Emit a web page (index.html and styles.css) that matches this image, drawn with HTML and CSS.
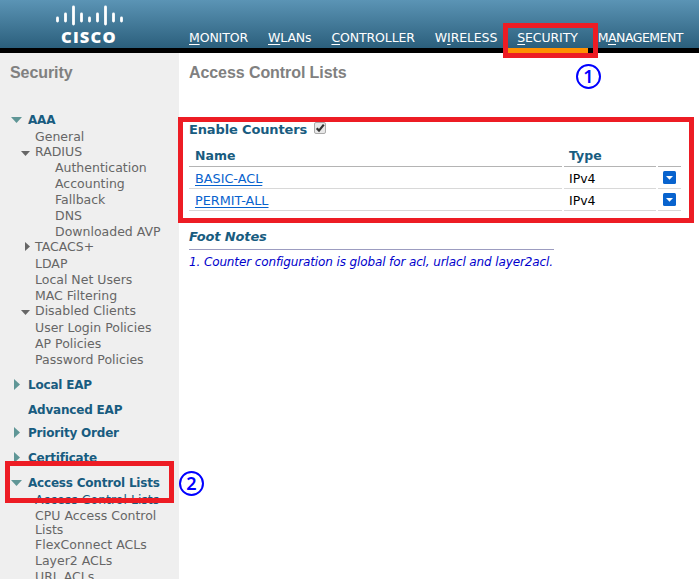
FILE: index.html
```html
<!DOCTYPE html>
<html lang="en">
<head>
<meta charset="utf-8">
<title>Access Control Lists</title>
<link rel="stylesheet" href="styles.css">
</head>
<body>
<header class="topbar">
  <div class="brand">
    <svg class="bars" width="70" height="23" viewBox="0 0 70 23" stroke="#fff" stroke-width="2.8" stroke-linecap="round">
      <path d="M3.5 15V18M11.5 11V18M19.5 4V21M27.5 11V18M35.5 15V18M43.5 11V18M51.5 4V21M59.5 11V18M67.5 15V18"/>
    </svg>
    <span class="wordmark">CISCO</span>
  </div>
  <nav class="menu">
    <a><u>M</u>ONITOR</a>
    <a><u>W</u>LANs</a>
    <a><u>C</u>ONTROLLER</a>
    <a>W<u>I</u>RELESS</a>
    <a class="current"><u>S</u>ECURITY</a>
    <a class="last">M<u>A</u>NAGEMENT</a>
  </nav>
</header>
<div class="body">
  <aside class="sidebar">
    <h2 class="title">Security</h2>
    <ul class="tree">
      <li class="group open">AAA</li>
      <li class="item first">General</li>
      <li class="item branch open">RADIUS</li>
      <li class="item sub">Authentication</li>
      <li class="item sub">Accounting</li>
      <li class="item sub">Fallback</li>
      <li class="item sub">DNS</li>
      <li class="item sub">Downloaded AVP</li>
      <li class="item closed branch-closed">TACACS+</li>
      <li class="item after">LDAP</li>
      <li class="item">Local Net Users</li>
      <li class="item">MAC Filtering</li>
      <li class="item branch open">Disabled Clients</li>
      <li class="item after">User Login Policies</li>
      <li class="item">AP Policies</li>
      <li class="item">Password Policies</li>
      <li class="group closed">Local EAP</li>
      <li class="group">Advanced EAP</li>
      <li class="group closed tight">Priority Order</li>
      <li class="group closed">Certificate</li>
      <li class="group open">Access Control Lists</li>
      <li class="item first active">Access Control Lists</li>
      <li class="item wrapped">CPU Access Control Lists</li>
      <li class="item">FlexConnect ACLs</li>
      <li class="item">Layer2 ACLs</li>
      <li class="item">URL ACLs</li>
    </ul>
  </aside>
  <main class="content">
    <h1 class="title">Access Control Lists</h1>
    <div class="counters"><span>Enable Counters</span>
      <svg width="12" height="12" viewBox="0 0 12 12"><rect x=".5" y=".5" width="11" height="11" rx="1.5" fill="#e8e8e8" stroke="#aaa"/><path d="M2.7 6.2L5 8.6L9.8 2.6" fill="none" stroke="#333" stroke-width="2.2"/></svg>
    </div>
    <div class="table">
      <div class="row head"><span>Name</span><span>Type</span><span></span></div>
      <div class="row"><span><a class="link">BASIC-ACL</a></span><span>IPv4</span><span class="drop"><svg width="13" height="13" viewBox="0 0 13 13"><rect width="13" height="13" rx="1.5" fill="#0863ce"/><path d="M3 5H10L6.5 8.7Z" fill="#fff"/></svg></span></div>
      <div class="row"><span><a class="link">PERMIT-ALL</a></span><span>IPv4</span><span class="drop"><svg width="13" height="13" viewBox="0 0 13 13"><rect width="13" height="13" rx="1.5" fill="#0863ce"/><path d="M3 5H10L6.5 8.7Z" fill="#fff"/></svg></span></div>
    </div>
    <section class="notes">
      <h3>Foot Notes</h3>
      <p>1. Counter configuration is global for acl, urlacl and layer2acl.</p>
    </section>
  </main>
</div>
<div class="frame frame-menu"></div>
<div class="frame frame-table"></div>
<div class="frame frame-tree"></div>
<div class="step step-one">1</div>
<div class="step step-two">2</div>
</body>
</html>
```
FILE: styles.css
```css
* { box-sizing: border-box; }
body {
  margin: 0;
  width: 699px;
  height: 579px;
  overflow: hidden;
  position: relative;
  background: #fff;
  font: 12.5px/16px "DejaVu Sans", Verdana, sans-serif;
  color: #666;
}
.topbar {
  display: flex;
  height: 53px;
  border-bottom: 5px solid #000;
  background: linear-gradient(#5b94b5, #2b5f7c);
  background-clip: padding-box;
}
.brand { width: 189px; padding: 3px 0 0 54px; }
.bars { display: block; }
.wordmark {
  display: block;
  margin: 3px 0 0 7px;
  font: 800 16.5px/16px "Open Sans", sans-serif;
  letter-spacing: 1.2px;
  color: #fff;
}
.menu { display: flex; gap: 20px; padding-top: 29px; height: 53px; }
.menu a { color: #fff; font-size: 12.5px; line-height: 17px; letter-spacing: -.12px; white-space: nowrap; }
.menu .last { letter-spacing: -.5px; }
.menu u { text-underline-offset: 2px; text-decoration-thickness: 1px; }
.menu .current {
  margin: 0 -10px;
  padding: 0 10px;
  height: 24px;
  border-bottom: 5px solid #ff9000;
}
.body { display: flex; height: 526px; }
.sidebar { width: 179px; background: #efefef; padding: 11px 0 0 10px; }
.title { margin: 0; font: bold 16px/18px "Liberation Sans", Arial, sans-serif; letter-spacing: -.08px; color: #808080; }
.tree { list-style: none; margin: 12px 0 0; padding: 9px 0 0; }
.tree li { position: relative; white-space: nowrap; }
.group { margin-top: 9px; padding-left: 18px; font-weight: bold; font-size: 12px; letter-spacing: -.2px; color: #185c80; }
.tree .tight { margin-top: 7px; }
.item { padding-left: 25px; }
.first { margin-top: 1px; }
.sub { padding-left: 45px; }
.branch { margin-top: -1px; }
.after { margin-top: 1px; }
.active { color: #185c80; }
.tree .wrapped { white-space: normal; line-height: 14px; padding-right: 10px; margin-top: 1px; }
.open::before, .closed::before {
  content: "";
  position: absolute;
  background: #5f9696;
}
.open::before { left: 1px; top: 5px; width: 11px; height: 6px; clip-path: polygon(0 0, 100% 0, 50% 100%); }
.closed::before { left: 4px; top: 2px; width: 6px; height: 11px; clip-path: polygon(0 0, 100% 50%, 0 100%); }
.branch.open::before { left: 11px; top: 7px; width: 9px; height: 5px; background: #666; }
.branch-closed { margin-top: -1px; }
.branch-closed::before { left: 15px; top: 3px; width: 5px; height: 9px; background: #666; }
.content { width: 520px; padding: 11px 0 0 10px; }
.counters {
  display: flex;
  gap: 7px;
  margin-top: 40px;
  font-size: 13px;
  letter-spacing: -.14px;
  font-weight: bold;
  color: #185c80;
}
.table { width: 492px; margin-top: 7px; }
.row { display: grid; grid-template-columns: 373px 92px 23px; column-gap: 2px; height: 22px; color: #000; }
.row > span { border-bottom: 1px solid #d8d8d8; padding: 4px 0 0 6px; }
.row > span:nth-child(2) { padding-left: 5px; }
.row.head { font-weight: bold; color: #185c80; }
.row.head > span { border-color: #b4b4b4; padding-top: 3px; }
.row > .drop { padding: 4px 0 0 5px; }
.drop svg { display: block; }
.link { font-size: 12.8px; color: #0863ce; text-decoration: underline; text-underline-offset: 2px; }
.notes { margin-top: 18px; }
.notes h3 { margin: 0; width: 365px; height: 21px; border-bottom: 1px solid #9c9cc0; font: italic bold 13px/16px "DejaVu Sans", sans-serif; letter-spacing: -.14px; color: #185c80; }
.notes p { margin: 4px 0 0; font-size: 12px; font-style: italic; letter-spacing: -.12px; color: #00c; white-space: nowrap; }
.frame { position: absolute; border: 5px solid #ed1c24; }
.frame-menu { left: 503px; top: 23px; width: 95px; height: 35px; }
.frame-table { left: 178px; top: 117px; width: 516px; height: 106px; }
.frame-tree { left: 5px; top: 461px; width: 169px; height: 42px; }
.step {
  position: absolute;
  width: 25px;
  height: 25px;
  border: 2px solid #00f;
  border-radius: 50%;
  background: #fff;
  font: 600 18px/21px "Noto Sans", sans-serif;
  text-align: center;
  color: #00f;
}
.step-one { left: 576px; top: 64px; }
.step-two { left: 179px; top: 471px; }
```
